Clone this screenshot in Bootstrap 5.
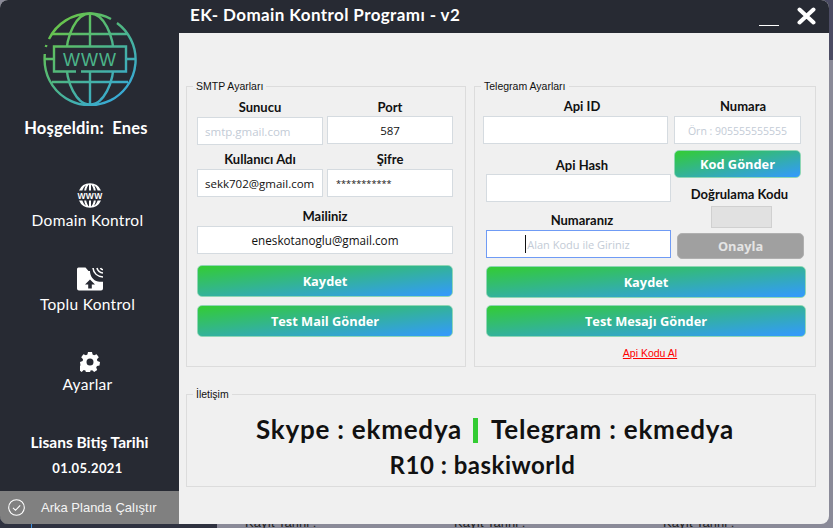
<!DOCTYPE html>
<html lang="tr">
<head>
  <meta charset="UTF-8" />
  <meta name="viewport" content="width=device-width, initial-scale=1" />
  <title>EK- Domain Kontrol Programı - v2</title>
  <link rel="stylesheet" href="https://cdn.jsdelivr.net/npm/bootstrap@5.3.0/dist/css/bootstrap.min.css" />
  <style>
    html, body { height: 100%; overflow: hidden; }
    body { background: #8a8a98; position: relative; font-family: "Lato", "Liberation Sans", sans-serif; }

    /* desktop visible behind the window */
    .behind-right { position: absolute; top: 0; right: 0; width: 10px; height: 60px; background: #4b4b63; }
    .behind-left { position: absolute; left: 0; bottom: 0; width: 217px; height: 12px; background: #2f3240; }
    .behind-blue { position: absolute; left: 31px; bottom: 0; width: 1px; height: 12px; background: #3a8fe0; }
    .behind-text { position: absolute; top: 516px; font: 13px/14px "Liberation Sans", sans-serif; color: #222; }
    .behind-a { left: 245px; }
    .behind-b { left: 454px; }
    .behind-c { left: 663px; }

    .app-window { position: relative; width: 829px; height: 524px; border-radius: 8px; overflow: hidden; background: #f0f0f0; }

    /* sidebar */
    .side-panel { width: 179px; background: #272a33; color: #fff; flex-shrink: 0; }
    .side-logo { margin-top: 12px; flex-shrink: 0; }
    .side-title { font-weight: 700; font-size: 16.5px; letter-spacing: .2px; line-height: 18px; margin-top: 13px; margin-right: 7px; white-space: pre; }
    .side-item { font-size: 15.5px; line-height: 18px; letter-spacing: .3px; }
    .side-item svg { display: block; margin: 0 auto 3px; }
    .side-item span { display: block; margin-right: 4px; }
    .item-domain { margin-top: 46px; }
    .item-toplu { margin-top: 38px; }
    .item-toplu svg { margin-bottom: 4px; }
    .item-ayar { margin-top: 39px; }
    .side-license { font-weight: 700; font-size: 15.5px; line-height: 18px; margin-top: 40px; }
    .side-date { font-weight: 700; font-size: 13px; line-height: 16px; margin-top: 9px; margin-right: 4px; letter-spacing: .4px; }
    .side-footer { height: 33px; flex-shrink: 0; background: #808080; font: 13px "Liberation Sans", sans-serif; padding-left: 8px; gap: 16px; color: #f4f4f4; }

    /* title bar */
    .title-bar { height: 33px; background: #272a33; color: #fff; padding-left: 11px; padding-right: 13px; }
    .title-text { font-weight: 700; font-size: 17px; letter-spacing: .4px; line-height: 30px; }
    .title-min { width: 20px; height: 1px; background: #fff; margin-top: 25px; margin-right: 18px; }
    .title-close { margin-top: 7px; }

    .main-body { padding: 47px 13px 0 7px; }

    /* group boxes */
    .group-box { border: 1px solid #dcdcdc; padding: 6px 10px 0; }
    .group-box legend { float: none; width: auto; font: 10.5px/13px "Liberation Sans", sans-serif; color: #111; margin: 0 0 0 -4px; padding: 0 3px; }
    .group-smtp { width: 280px; height: 287px; }
    .group-tg { width: 342px; height: 287px; padding-top: 5px; padding-left: 8px; }
    .group-tg legend { margin-left: -2px; }
    .group-contact { height: 99px; margin-top: 21px; padding-top: 10px; }

    .field-label { display: block; font-weight: 700; font-size: 13px; line-height: 17px; height: 17px; text-align: center; color: #111; margin: 0; }
    .label-up { line-height: 15px; }
    .field-input { height: 28px; border: 1px solid #d5dbe0; border-radius: 0; padding: 0 2px 0 7px; font: 11.5px "Open Sans", sans-serif; color: #111; background: #fff; box-shadow: none; }
    .field-input::placeholder { color: #c3cbd6; opacity: 1; }
    .input-mid { padding: 0 2px; }
    .input-mail { font-size: 11.7px; }
    .input-hint-num::placeholder { font-size: 10.5px; }
    .input-hint-area::placeholder { font-size: 11px; }
    .input-pass { font-size: 9.2px; padding-left: 8px; }
    .field-w { width: 126px; }
    .field-full { width: 256px; }
    .offset-down { margin-top: 1px; }

    .grad-btn { display: block; width: 100%; height: 32px; padding: 0; border: 1px solid #8fd6b5; border-radius: 5px; background: linear-gradient(to bottom right, #33cc33, #3399ff); color: #fff; font: 700 12.8px "Open Sans", sans-serif; }
    .grad-btn:hover { color: #fff; }
    .btn-short { height: 28px; }
    .grad-btn.btn-off, .grad-btn.btn-off:disabled { height: 26px; width: 127px; margin: 5px 0 0 3px; background: #a0a0a0; border-color: #b0b0b0; color: #e4e4e4; opacity: 1; }

    /* telegram column */
    .tg-left { width: 188px; margin-right: 3px; }
    .tg-right { width: 130px; }
    .tg-first { height: 18px; line-height: 16px; }
    .tg-wide { width: 185px; }
    .tg-indent { margin-left: 3px; }
    .tg-shift { margin-left: 6.5px; }
    .tg-num { width: 127px; }
    .tg-label-num { width: 127px; margin-left: 5.5px; }
    .tg-label-verify { width: 127px; margin-left: 2px; }
    .tg-code { width: 61px; height: 22px; margin: 3px 0 0 37px; background: #e1e1e1; border: 1px solid #d0d0d0; }
    .tg-focus { border-color: #6f9bf5; }
    .tg-buttons { padding-left: 3px; width: 323px; }
    .caret-wrap { position: relative; }
    .caret-line { position: absolute; left: 39px; top: 5px; width: 1px; height: 18px; background: #111; }
    .api-row { margin-top: 7px; padding-left: 8px; line-height: 14px; text-align: center; }
    .api-link { font: 10.5px/14px "Liberation Sans", sans-serif; color: #f00; }

    /* contact */
    .contact-line { font-weight: 700; font-size: 26px; line-height: 36px; color: #111; letter-spacing: .77px; text-align: center; padding-right: 12px; }
    .contact-second { font-size: 24px; letter-spacing: .5px; padding-right: 37px; }
    .contact-bar { display: inline-block; width: 5px; height: 25px; background: #33cc33; margin: 0 13px 0 11px; vertical-align: -4px; }

    .row-kullanici { margin-top: 7px; }
    .row-mail { margin-top: 12px; }
    .row-save { margin-top: 11px; }
    .row-test { margin-top: 8px; }
    .row-hash { margin-top: 13px; }
    .row-num { margin-top: 10px; }
    .num-input-gap { margin-top: 1px; }
    .row-code { margin-top: 6px; }
    .row-verify { margin-top: 8px; }
    .row-tg-save { margin-top: 7px; }
    .row-tg-test { margin-top: 7px; }
  </style>
</head>
<body>
  <div class="behind-right"></div>
  <div class="behind-left"></div>
  <div class="behind-blue"></div>
  <span class="behind-text behind-a">Kayıt Tarihi :</span>
  <span class="behind-text behind-b">Kayıt Tarihi :</span>
  <span class="behind-text behind-c">Kayıt Tarihi :</span>

  <div class="app-window d-flex">
    <!-- Sidebar -->
    <aside class="side-panel d-flex flex-column text-center">
      <svg class="side-logo mx-auto" width="94" height="94" viewBox="0 0 94 94" fill="none" stroke="url(#logoGrad)" stroke-width="2.4">
        <defs>
          <linearGradient id="logoGrad" gradientUnits="userSpaceOnUse" x1="10" y1="8" x2="80" y2="90">
            <stop offset="0" stop-color="#6cc644" />
            <stop offset=".5" stop-color="#4cb58a" />
            <stop offset="1" stop-color="#35a8e0" />
          </linearGradient>
        </defs>
        <path d="M68 7A45.500 45.500 0 0 0 47 1.500 45.500 45.500 0 0 0 6 27" />
        <path d="M3.400 33 2.800 35" />
        <path d="M74 11A45.500 45.500 0 1 1 1.600 47a46 46 0 0 1 .2-5" />
        <ellipse cx="47" cy="47" rx="24" ry="45.500" />
        <path d="M47 1.500v91M9 22h76M9 70h76M2 47h9M83 47h9" />
        <rect x="11" y="34.500" width="72" height="25" fill="#272a33" stroke="none" />
        <path d="M33 59.500H11v-25h72v25H38" fill="#272a33" />
        <text x="47" y="53.500" text-anchor="middle" fill="#4cb58a" stroke="none" font-family="Liberation Sans, sans-serif" font-size="18" letter-spacing="1">WWW</text>
      </svg>
      <div class="side-title">Hoşgeldin:  Enes</div>

      <div class="side-item item-domain">
        <svg width="26" height="25" viewBox="0 0 26 25" fill="#fff">
          <path d="M2 7.500A12 12 0 0 1 24 7.500H20.600C20 5.400 18.800 3.400 17 2.200 18 4 18.500 5.600 18.800 7.500H16.800C16.500 5 15.200 2.500 14 1.400V7.500H12V1.400C10.800 2.500 9.500 5 9.200 7.500H7.200C7.500 5.600 8 4 9 2.200 7.200 3.400 6 5.400 5.400 7.500Z" />
          <path d="M2 17.500A12 12 0 0 0 24 17.500H20.600C20 19.600 18.800 21.600 17 22.800 18 21 18.500 19.400 18.800 17.500H16.800C16.500 20 15.200 22.500 14 23.600V17.500H12V23.600C10.800 22.500 9.500 20 9.200 17.500H7.200C7.500 19.400 8 21 9 22.800 7.200 21.600 6 19.600 5.400 17.500Z" />
          <text x="13" y="15.600" text-anchor="middle" font-family="Liberation Sans, sans-serif" font-weight="700" font-size="8.500">WWW</text>
        </svg>
        <span>Domain Kontrol</span>
      </div>

      <div class="side-item item-toplu">
        <svg width="26" height="24" viewBox="0 0 26 24" fill="#fff">
          <path d="M0 2a1.500 1.500 0 0 1 1.500-1.500h7l3 3.500h1.500c0 5 3 9.500 8 10.500 1.500.3 3.500.5 5 .2V21.500a2 2 0 0 1-2 2H2a2 2 0 0 1-2-2Z" />
          <path d="M13 12.500l-5 5h3.200v4h3.600v-4H18Z" fill="#272a33" />
          <path d="M16 1c.5 5 4.500 8.500 10 9M20 1c.5 2.500 3 4.800 6 5M23.500 1c.3.800 1.200 1.500 2.500 1.700" fill="none" stroke="#fff" stroke-width="1.600" />
        </svg>
        <span>Toplu Kontrol</span>
      </div>

      <div class="side-item item-ayar">
        <svg width="20" height="20" viewBox="0 0 20 20" fill="#fff">
          <path fill-rule="evenodd" d="M8 0h4l.6 2.600 1.500.7 2.500-1.100 2.200 3-1.800 2 .3 1.800L20 10l-.5 3.500-2.500.5-.8 1.500 1 2.400-3 2-2-1.700-1.700.3-.5 2h-4l-.6-2-1.700-.4-2 1.800-3-2.100 1-2.400-.8-1.500L.5 13.500 0 10l2.700-1 .3-1.800-1.800-2 2.200-3 2.500 1.100 1.500-.7ZM10 6.500a3.500 3.500 0 1 0 0 7 3.500 3.500 0 0 0 0-7Z" />
        </svg>
        <span>Ayarlar</span>
      </div>

      <div class="side-license">Lisans Bitiş Tarihi</div>
      <div class="side-date">01.05.2021</div>

      <div class="side-footer mt-auto d-flex align-items-center">
        <svg width="17" height="17" viewBox="0 0 17 17" fill="none" stroke="#fff" stroke-width="1.100">
          <circle cx="8.500" cy="8.500" r="7.800" />
          <path d="M5 8.800l2.500 2.500 4.700-5" />
        </svg>
        <span>Arka Planda Çalıştır</span>
      </div>
    </aside>

    <!-- Main area -->
    <div class="flex-grow-1 d-flex flex-column">
      <div class="title-bar d-flex">
        <div class="title-text me-auto">EK- Domain Kontrol Programı - v2</div>
        <div class="title-min"></div>
        <svg class="title-close" width="19" height="18" viewBox="0 0 19 18" stroke="#fff" stroke-width="4" stroke-linecap="round">
          <path d="M2.500 2.500l14 13M16.500 2.500l-14 13" />
        </svg>
      </div>

      <div class="main-body">
        <div class="d-flex gap-2">
          <fieldset class="group-box group-smtp">
            <legend>SMTP Ayarları</legend>
            <div class="d-flex gap-1">
              <div class="field-w">
                <label class="field-label">Sunucu</label>
                <input class="form-control field-input offset-down" placeholder="smtp.gmail.com" />
              </div>
              <div class="field-w">
                <label class="field-label">Port</label>
                <input class="form-control field-input input-mid text-center" value="587" />
              </div>
            </div>
            <div class="d-flex gap-1 row-kullanici">
              <div class="field-w">
                <label class="field-label label-up">Kullanıcı Adı</label>
                <input class="form-control field-input" value="sekk702@gmail.com" />
              </div>
              <div class="field-w">
                <label class="field-label label-up">Şifre</label>
                <input class="form-control field-input input-pass" value="***********" />
              </div>
            </div>
            <div class="field-full row-mail">
              <label class="field-label label-up">Mailiniz</label>
              <input class="form-control field-input input-mid input-mail text-center" value="eneskotanoglu@gmail.com" />
            </div>
            <div class="field-full row-save">
              <button class="btn grad-btn">Kaydet</button>
              <button class="btn grad-btn row-test">Test Mail Gönder</button>
            </div>
          </fieldset>

          <fieldset class="group-box group-tg">
            <legend>Telegram Ayarları</legend>
            <div class="d-flex">
              <div class="tg-left">
                <label class="field-label tg-first tg-wide tg-shift">Api ID</label>
                <input class="form-control field-input tg-wide" />
                <label class="field-label tg-shift tg-wide row-hash">Api Hash</label>
                <input class="form-control field-input tg-indent tg-wide" />
                <label class="field-label tg-shift tg-wide row-num">Numaranız</label>
                <div class="caret-wrap tg-indent tg-wide num-input-gap">
                  <input class="form-control field-input input-mid input-hint-area tg-focus text-center" placeholder="Alan Kodu ile Giriniz" />
                  <span class="caret-line"></span>
                </div>
              </div>
              <div class="tg-right">
                <label class="field-label tg-first tg-label-num">Numara</label>
                <input class="form-control field-input input-mid input-hint-num tg-num text-center" placeholder="Örn : 905555555555" />
                <button class="btn grad-btn btn-short tg-num row-code">Kod Gönder</button>
                <label class="field-label tg-label-verify row-verify">Doğrulama Kodu</label>
                <div class="tg-code"></div>
                <button class="btn grad-btn btn-off" disabled>Onayla</button>
              </div>
            </div>
            <div class="tg-buttons row-tg-save">
              <button class="btn grad-btn">Kaydet</button>
              <button class="btn grad-btn row-tg-test">Test Mesajı Gönder</button>
              <div class="api-row"><a href="#" class="api-link">Api Kodu Al</a></div>
            </div>
          </fieldset>
        </div>

        <fieldset class="group-box group-contact">
          <legend>İletişim</legend>
          <div class="contact-line">Skype : ekmedya<span class="contact-bar"></span>Telegram : ekmedya</div>
          <div class="contact-line contact-second">R10 : baskiworld</div>
        </fieldset>
      </div>
    </div>
  </div>

  <script src="https://cdn.jsdelivr.net/npm/bootstrap@5.3.0/dist/js/bootstrap.bundle.min.js"></script>
</body>
</html>
